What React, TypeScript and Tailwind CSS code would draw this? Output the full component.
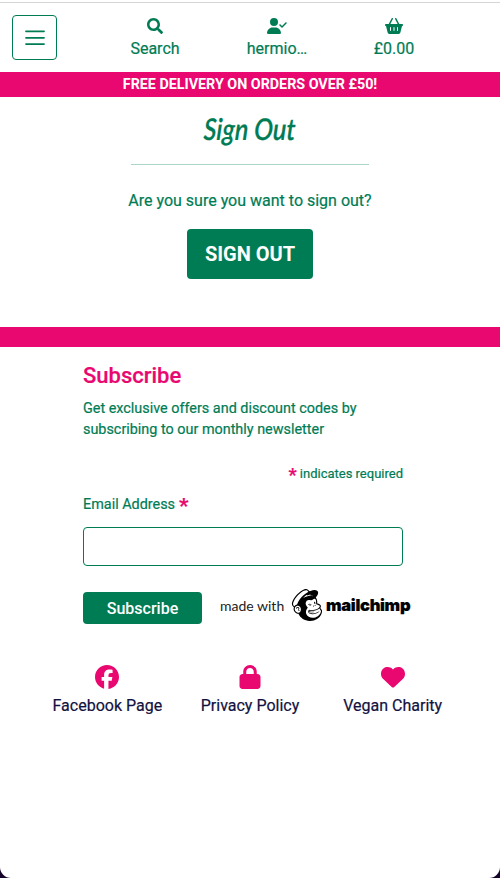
import type { ReactNode } from 'react';
import { FaSearch } from 'react-icons/fa';
import { FaBasketShopping, FaFacebook, FaHeart, FaLock, FaUserCheck } from 'react-icons/fa6';
import { SiMailchimp } from 'react-icons/si';

function NavItem({ icon, label, className }: { icon: ReactNode; label: string; className: string }) {
  return (
    <a href="#" className={`flex flex-col items-center text-base leading-6 text-[#007c55] ${className}`}>
      <span className="flex h-4 items-center">{icon}</span>
      <span className="mt-[3px]">{label}</span>
    </a>
  );
}

function FooterLink({ icon, label }: { icon: ReactNode; label: string }) {
  return (
    <a href="#" className="flex flex-1 flex-col items-center text-base leading-6 text-[#12123f]">
      <span className="flex h-6 items-center text-2xl text-[#e9086f]">{icon}</span>
      <span className="mt-[5px]">{label}</span>
    </a>
  );
}

export default function App() {
  return (
    <div className="h-[878px] w-[500px] overflow-hidden bg-[#160329]">
      <div className="h-full overflow-hidden rounded-b-[11px] bg-white font-['Roboto',sans-serif] text-[#007c55] [-webkit-text-stroke:0.2px]">
        <header className="mt-[2px] flex h-[70px] items-start border-t border-[#d5d5d5]">
          <button className="mt-3 ml-3 flex size-[45px] items-center justify-center rounded border border-[#007c55]">
            <svg width="22" height="18" viewBox="0 0 22 18" fill="none" stroke="#007c55" strokeWidth="1.8" strokeLinecap="round">
              <path d="M2 2.3h18M2 8.8h18M2 15.1h18" />
            </svg>
          </button>
          <nav className="mt-[15px] flex">
            <NavItem className="ml-[38px] w-[120px]" icon={<FaSearch size={16} />} label="Search" />
            <NavItem className="w-[124px]" icon={<FaUserCheck className="h-4 w-5" />} label="hermio…" />
            <NavItem className="w-[110px]" icon={<FaBasketShopping className="h-4 w-[18px]" />} label="£0.00" />
          </nav>
        </header>
        <div className="flex h-[25px] items-center justify-center bg-[#e9086f] text-[14.3px] leading-[21px] font-bold text-white [-webkit-text-stroke:0]">
          FREE DELIVERY ON ORDERS OVER £50!
        </div>
        <main className="flex h-[230px] flex-col items-center">
          <h1 className="mt-3 h-[38px] origin-center scale-x-[0.84] -skew-x-3 font-['Lato',cursive] text-[30px] leading-[38px] font-semibold italic">Sign Out</h1>
          <div className="mt-[17px] h-px w-[238px] bg-[#a9d6c8]" />
          <p className="mt-6 text-base leading-6">Are you sure you want to sign out?</p>
          <button className="mt-4 h-[50px] w-[126px] rounded-[4px] bg-[#007c55] text-xl font-bold text-white [-webkit-text-stroke:0]">SIGN OUT</button>
        </main>
        <div className="h-5 bg-[#e9086f]" />
        <section className="ml-[83px] w-[320px]">
          <h2 className="pt-[15px] text-[22px] leading-[27px] font-medium text-[#e9086f]">Subscribe</h2>
          <p className="mt-[9px] text-[14.4px] leading-[21px] whitespace-nowrap">
            Get exclusive offers and discount codes by<br />subscribing to our monthly newsletter
          </p>
          <p className="mt-[22px] flex h-6 items-center justify-end gap-[3px] text-[13px]">
            <span className="h-5 text-lg leading-[22px] font-bold text-[#e9086f]">*</span>
            <span>indicates required</span>
          </p>
          <label className="mt-[3px] flex h-8 items-center gap-1 text-[14.4px]">
            Email Address
            <span className="h-6 text-[21px] leading-[26px] font-bold text-[#e9086f]">*</span>
          </label>
          <input className="mt-[6px] block h-[39px] w-full rounded border border-[#007c55] bg-white px-3 outline-none" />
          <div className="mt-[22px] flex h-9 w-[340px] items-start">
            <button className="mt-1 h-8 w-[119px] rounded-[4px] bg-[#007c55] pt-px text-base font-medium text-white [-webkit-text-stroke:0]">Subscribe</button>
            <span className="mt-2 ml-[18px] w-[65px] font-['Lato',sans-serif] text-[14px] leading-5 text-[#222] [-webkit-text-stroke:0]">made with</span>
            <SiMailchimp className="mt-px ml-[6px] size-8 text-black" />
            <span className="mt-[7px] ml-[3px] font-['Inter',sans-serif] text-[16.5px] leading-5 font-black tracking-[-0.3px] text-black">mailchimp</span>
          </div>
        </section>
        <footer className="mx-9 mt-[41px] flex">
          <FooterLink icon={<FaFacebook />} label="Facebook Page" />
          <FooterLink icon={<FaLock />} label="Privacy Policy" />
          <FooterLink icon={<FaHeart />} label="Vegan Charity" />
        </footer>
      </div>
    </div>
  );
}
